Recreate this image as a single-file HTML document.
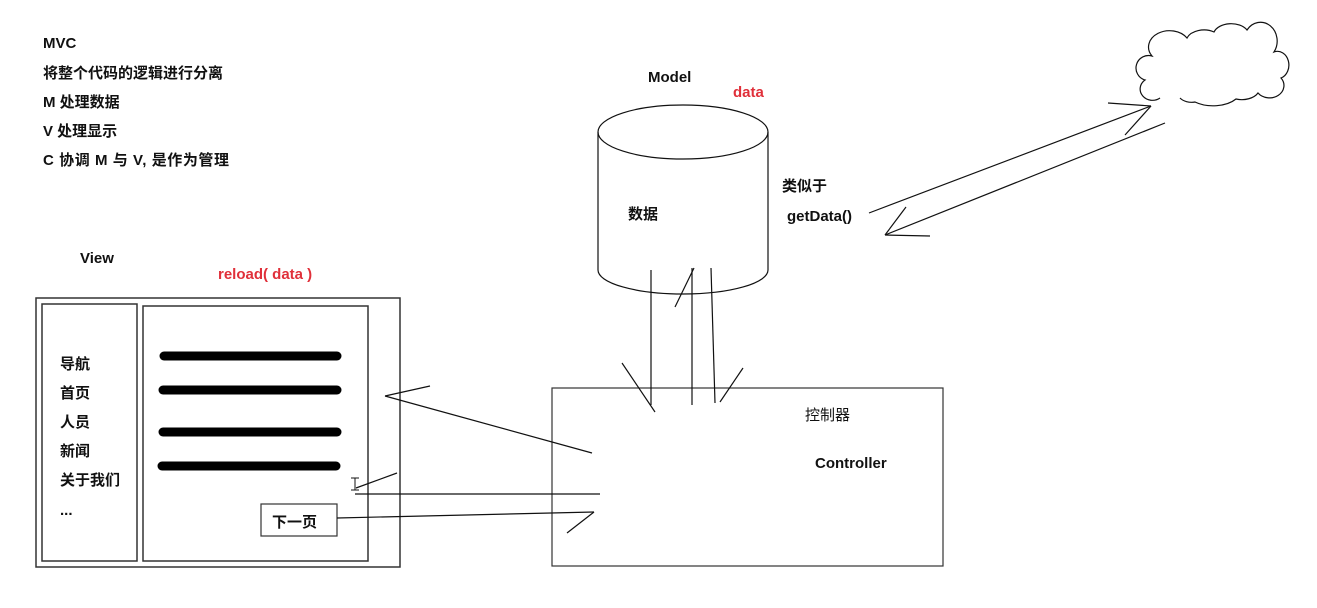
<!DOCTYPE html>
<html><head><meta charset="utf-8"><style>
html,body{margin:0;padding:0;background:#fff;}
svg{display:block}
text{font-family:"Liberation Sans","Noto Sans CJK SC",sans-serif;font-weight:bold;font-size:15px;fill:#111}
.r{fill:#e0303a}
</style></head><body>
<svg width="1317" height="608" viewBox="0 0 1317 608" xmlns="http://www.w3.org/2000/svg">
<g>
<text x="43" y="48">MVC</text>
<text x="43" y="78">将整个代码的逻辑进行分离</text>
<text x="43" y="107">M 处理数据</text>
<text x="43" y="136">V 处理显示</text>
<text x="43" y="165" textLength="186">C 协调 M 与 V, 是作为管理</text>
<text x="80" y="263">View</text>
<text x="218" y="279" class="r">reload( data )</text>
<text x="648" y="82">Model</text>
<text x="733" y="97" class="r">data</text>
<text x="628" y="219">数据</text>
<text x="782" y="191">类似于</text>
<text x="787" y="221">getData()</text>
<text x="805" y="420" style="font-weight:normal">控制器</text>
<text x="815" y="468">Controller</text>
<text x="60" y="369">导航</text>
<text x="60" y="398">首页</text>
<text x="60" y="427">人员</text>
<text x="60" y="456">新闻</text>
<text x="60" y="485">关于我们</text>
<text x="60" y="515">...</text>
<text x="272" y="527">下一页</text>
</g>
<g fill="none" stroke="#333" stroke-width="1.5">
<rect x="36" y="298" width="364" height="269"/>
<rect x="42" y="304" width="95" height="257"/>
<rect x="143" y="306" width="225" height="255"/>
<rect x="261" y="504" width="76" height="32" stroke-width="1.2"/>
<rect x="552" y="388" width="391" height="178" stroke-width="1.2"/>
</g>
<g stroke="#000" stroke-width="9" stroke-linecap="round">
<line x1="164" y1="356" x2="337" y2="356"/>
<line x1="163" y1="390" x2="337" y2="390"/>
<line x1="163" y1="432" x2="337" y2="432"/>
<line x1="162" y1="466" x2="336" y2="466"/>
</g>
<g fill="none" stroke="#111" stroke-width="1.2">
<ellipse cx="683" cy="132" rx="85" ry="27"/>
<path d="M598 132 V270 A85 24 0 0 0 768 270 V132"/>
<line x1="651" y1="270" x2="651" y2="405"/>
<line x1="692" y1="268" x2="692" y2="405"/>
<line x1="711" y1="268" x2="715" y2="403"/>
<line x1="622" y1="363" x2="655" y2="412"/>
<line x1="675" y1="307" x2="694" y2="268"/>
<line x1="720" y1="402" x2="743" y2="368"/>
<line x1="385" y1="396" x2="592" y2="453"/>
<line x1="385" y1="396" x2="430" y2="386"/>
<line x1="355" y1="494" x2="600" y2="494"/>
<line x1="356" y1="488" x2="397" y2="473"/>
<line x1="337" y1="518" x2="594" y2="512"/>
<line x1="594" y1="512" x2="567" y2="533"/>
<line x1="869" y1="213" x2="1151" y2="106"/>
<line x1="1108" y1="103" x2="1151" y2="106"/>
<line x1="1125" y1="135" x2="1151" y2="106"/>
<line x1="885" y1="235" x2="1165" y2="123"/>
<line x1="885" y1="235" x2="906" y2="207"/>
<line x1="885" y1="235" x2="930" y2="236"/>
<path d="M355 478 v12 M351 478 h8 M351 490 h8" stroke-width="1"/>
<path d="M1160 98 A12 11 0 0 1 1145 80 A10 10 0 0 1 1152 56 A18 14 0 0 1 1187 38 A18 12 0 0 1 1214 32 A18 12 0 0 1 1247 30 A16 18 0 0 1 1274 52 A10 12 0 0 1 1281 78 A14 12 0 0 1 1258 93 A18 12 0 0 1 1236 99 A28 16 0 0 1 1195 102 A14 10 0 0 1 1180 98"/>
</g>
</svg>
</body></html>
